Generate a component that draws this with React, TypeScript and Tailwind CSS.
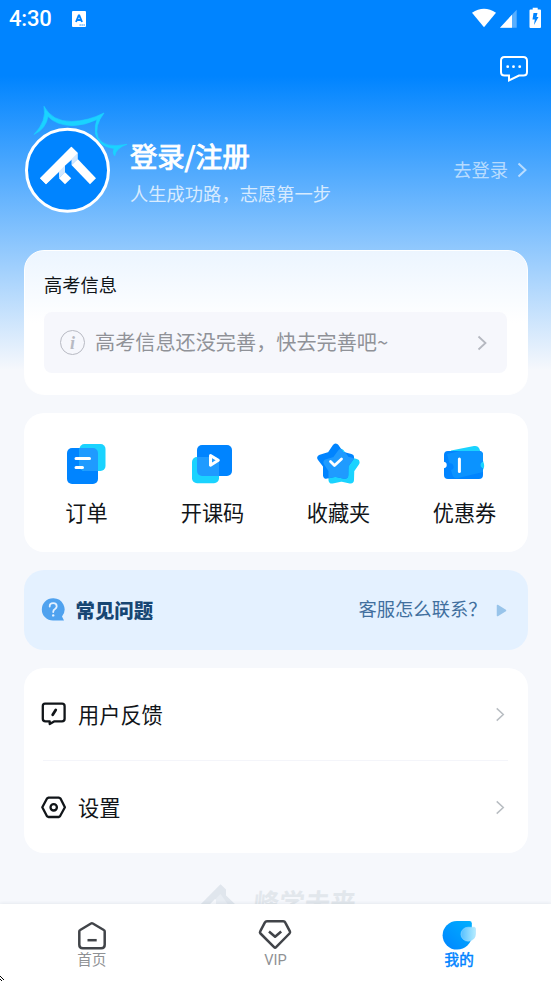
import React from "react";

interface MenuItemI {
  title: string;
  icon: React.ReactNode;
}

const star = "335.7,447.200 341,455 350.500,457.500 345,465.300 344.800,475.200 335.500,473.300 326.500,475.200 326.500,465.500 320.800,458 330.500,455";
const starBack = "341,452.500 346.500,460 356,462.500 350.800,470 350.500,480 341.500,478 332,480 332,470 327,462.500 335.500,460";

const shortcuts: MenuItemI[] = [
  {
    title: "订单",
    icon: (
      <svg className="-ml-px h-11 w-11" viewBox="64 442 44 44">
        <rect x="67" y="448" width="31" height="36" rx="5" fill="#0084ff" />
        <rect x="79.5" y="444" width="26" height="27" rx="5" fill="#1ad3ff" />
        <path d="M79.5 448H93a5 5 0 0 1 5 5V471H84.500a5 5 0 0 1-5-5Z" fill="#1f9bff" />
        <path d="M76 458.500H89.500M76 467.500H82.500" stroke="#fff" strokeWidth="3" strokeLinecap="round" />
      </svg>
    ),
  },
  {
    title: "开课码",
    icon: (
      <svg className="-ml-px h-11 w-11" viewBox="190 442 44 44">
        <rect x="197" y="445" width="35" height="31" rx="5" fill="#0084ff" />
        <rect x="192" y="457" width="27" height="26.300" rx="5" fill="#1ad3ff" />
        <path d="M197 457H214a5 5 0 0 1 5 5V476H202a5 5 0 0 1-5-5Z" fill="#1f9bff" />
        <path d="M210.500 455.500L218.300 460.300L210.500 465.200Z" fill="none" stroke="#fff" strokeWidth="3" strokeLinejoin="round" />
      </svg>
    ),
  },
  {
    title: "收藏夹",
    icon: (
      <svg className="-ml-px h-11 w-11" viewBox="316 442 44 44" strokeWidth="7" strokeLinejoin="round">
        <mask id="starMask" maskUnits="userSpaceOnUse" x="316" y="442" width="44" height="44">
          <polygon points={star} fill="#fff" stroke="#fff" />
        </mask>
        <polygon points={starBack} fill="#1ad3ff" stroke="#1ad3ff" />
        <polygon points={star} fill="#0084ff" stroke="#0084ff" />
        <polygon points={starBack} fill="#1f9bff" stroke="#1f9bff" mask="url(#starMask)" />
        <path d="M330.500 461.500L334.500 465.500L341.500 459" fill="none" stroke="#fff" strokeWidth="2.800" strokeLinecap="round" />
      </svg>
    ),
  },
  {
    title: "优惠券",
    icon: (
      <svg className="-ml-px h-11 w-11" viewBox="442 442 44 44">
        <path d="M451 450.500L474 446Q478 445.300 479.500 449L484 464Q485 468 481 473H455Z" fill="#1ad3ff" />
        <path d="M448 451H479Q483 451 483 455V461.800A3.300 3.300 0 0 0 483 468.300V475Q483 479 479 479H448Q444 479 444 475V468.300A3.300 3.300 0 0 0 444 461.800V455Q444 451 448 451Z" fill="#0084ff" />
        <path d="M447 454L460 451H479Q483 451 483 455V461.800A3.300 3.300 0 0 0 483 468.300V472L458 478Q454 479 452.500 475L451 470A3.300 3.300 0 0 0 449.500 463.500Z" fill="#0b93ff" />
        <path d="M459.400 459V471.500" stroke="#fff" strokeWidth="3" strokeLinecap="round" />
      </svg>
    ),
  },
];

const settings: MenuItemI[] = [
  {
    title: "用户反馈",
    icon: (
      <svg className="h-7 w-7" viewBox="40 700 28 28" fill="none" stroke="#111519" strokeWidth="2.300" strokeLinejoin="round" strokeLinecap="round">
        <path d="M45 703.700H62Q64.600 703.700 64.600 706.300V718.700Q64.600 721.300 62 721.300H54.500L49.700 724V721.300H45.500Q42.800 721.300 42.800 718.700V706.300Q42.800 703.700 45 703.700Z" />
        <path d="M52.700 714.700L55.700 710" strokeWidth="2.800" />
      </svg>
    ),
  },
  {
    title: "设置",
    icon: (
      <svg className="h-7 w-7" viewBox="40 793 28 28" fill="none" stroke="#111519" strokeWidth="2.300" strokeLinejoin="round">
        <path d="M48.300 797.700H59L60.500 798.500L64.900 807.300L60 816.200L58.700 817H48.500L47 816.200L42.300 807.300L47 798.500Z" />
        <circle cx="53.700" cy="807.300" r="3.200" />
      </svg>
    ),
  },
];

const tabs: MenuItemI[] = [
  {
    title: "首页",
    icon: (
      <svg className="h-8 w-9" viewBox="74 919 36 32" fill="none" stroke="#414449" strokeWidth="2.500" strokeLinejoin="round">
        <path d="M79.300 931.500Q79.300 930.500 80.200 930L91 923.500Q91.900 923 92.800 923.500L103.800 930Q104.700 930.500 104.700 931.500V944.800Q104.700 948.300 101.200 948.300H82.800Q79.300 948.300 79.300 944.800Z" />
        <path d="M87.500 940.200H96.700" />
      </svg>
    ),
  },
  {
    title: "VIP",
    icon: (
      <svg className="h-8 w-9" viewBox="257.500 919 36 32" fill="none" stroke="#414449" strokeWidth="2.500" strokeLinejoin="round">
        <path d="M267.500 921.300H283.700Q285.200 921.300 285.800 922.600L290.400 931.300Q290.900 932.500 290 933.500L276.600 947.200Q275.600 948.200 274.600 947.200L261 933.500Q260 932.500 260.700 931.300L265.300 922.600Q266 921.300 267.500 921.300Z" />
        <path d="M269.500 931.500L275.600 936.800L281.700 931.500" />
      </svg>
    ),
  },
  {
    title: "我的",
    icon: (
      <svg className="h-8 w-9" viewBox="441.500 919 36 32">
        <defs>
          <linearGradient id="mineBody" x1="1" y1="0" x2="0" y2="1">
            <stop offset="0" stopColor="#00b0ff" />
            <stop offset="1" stopColor="#0084ff" />
          </linearGradient>
          <linearGradient id="mineDrop" x1="0" y1="0" x2="1" y2="0">
            <stop offset="0" stopColor="#55bfff" />
            <stop offset="1" stopColor="#b4ecff" />
          </linearGradient>
        </defs>
        <path d="M457.500 921H470Q472.300 921 472.300 923.300V935.500A14.600 14.300 0 1 1 457.500 921Z" fill="url(#mineBody)" />
        <path d="M468.500 927.200H474.500Q476 927.200 476 928.700V934A7.300 7 0 1 1 468.500 927.200Z" fill="url(#mineDrop)" stroke="#a0dcff" strokeWidth="0.500" />
      </svg>
    ),
  },
];

function Chevron({ className }: { className: string }) {
  return (
    <svg className={className} viewBox="0 0 10 16" fill="none" stroke="currentColor">
      <path d="M1.500 1.500L8.500 8L1.500 14.500" />
    </svg>
  );
}

function StatusBar() {
  return (
    <div className="flex h-[38px] items-center pl-[9px] text-white">
      <span className="w-[60px] font-['Roboto'] text-[22px] font-medium leading-[38px] tracking-[-0.2px]">4:30</span>
      <svg className="ml-[3px] h-4 w-3.5" viewBox="0 0 14 16">
        <rect width="14" height="16" rx="1" fill="#fff" />
        <path d="M4 11L6.700 4.500H7.300L10 11M5 9H9" fill="none" stroke="#0084ff" strokeWidth="1.900" />
        <path d="M7.500 14H13" stroke="#0084ff" strokeWidth="1" strokeDasharray="1.300 0.700" />
      </svg>
      <svg className="ml-auto mr-2 h-6 w-[74px]" viewBox="469 7 74 24" fill="#fff">
        <path d="M472 12.700Q484 4.700 496 12.700L484 27.300Z" />
        <path d="M516.700 9.700V27.700H500Z" opacity="0.350" />
        <path d="M512 14.800V27.700H500Z" />
        <path d="M532.700 7.800H537.700V9.500H540Q541 9.500 541 10.500V27Q541 28 540 28H530.500Q529.500 28 529.500 27V10.500Q529.500 9.500 530.500 9.500H532.700Z" />
        <path d="M533.500 13H537.500L536.500 17H538.500L534 25L534.800 19.500H532.500Z" fill="#0084ff" />
      </svg>
    </div>
  );
}

function Avatar() {
  return (
    <svg className="h-[120px] w-[106px] shrink-0" viewBox="22 100 106 120">
      <path
        d="M34 134.500Q47 121 44 106.300Q52 121.500 71.500 121.500Q88 121 104 113Q94 126 98 137.500Q104 149 127 144.300Q116 148 114.700 156Q112 153 114 148.500Q99 147 95.500 134Q94.500 125 97 119.500Q85 125.500 72 125.700Q56 125 48 116.500Q46 129 34 134.500Z"
        fill="#1ad3ff"
        stroke="#1ad3ff"
        strokeWidth="0.600"
      />
      <circle cx="67.500" cy="170.300" r="41" fill="#0084ff" stroke="#fff" strokeWidth="3" />
      <path d="M71.500 146.700L40 178.300L46 184.300L59 172V178.300L65 172.500V165.500L71.500 160V165L77.800 159V153Z" fill="#d2e8ff" />
      <path d="M71.300 146.700L77.700 153L46 184.300L40 178.300Z" fill="#fff" />
      <path d="M77.700 159L96 178.300L90 184.300L71.500 165Z" fill="#fff" />
      <path d="M65 172.300L71.200 178.300L65 184.300L59 178.300Z" fill="#fff" />
    </svg>
  );
}

export default function App() {
  return (
    <div className="relative flex h-[981px] w-[551px] flex-col overflow-hidden bg-[#f6f8fc] font-['Noto_Sans_CJK_SC',sans-serif] text-[#111519]">
      <main className="h-[904px] overflow-hidden bg-[linear-gradient(180deg,#0084ff_0px,#0084ff_76px,#f6f8fc_370px)]">
        <StatusBar />

        <div className="flex h-[62px] justify-end pr-[22px] pt-4">
          <svg className="h-[30px] w-[30px]" viewBox="499 54 30 30" fill="none" stroke="#fff" strokeWidth="2">
            <path d="M504.500 57H523.200Q527 57 527 60.800V72Q527 75.500 523.500 75.500H519L509 80.500V75.500H504.500Q501 75.500 501 72V60.800Q501 57 504.500 57Z" />
            <path d="M507.700 66.700H507.710M513.500 66.700H513.510M519.700 66.700H519.710" strokeWidth="2.800" strokeLinecap="round" />
          </svg>
        </div>

        <div className="flex h-[150px] pl-[22px] pr-6">
          <Avatar />
          <div className="ml-[2px] pt-[35px] text-white">
            <div className="text-[27.3px] leading-10 [-webkit-text-stroke:0.9px_#fff]">登录/注册</div>
            <div className="mt-[5px] text-[18.3px] leading-[26px] text-white/75">人生成功路，志愿第一步</div>
          </div>
          <div className="ml-auto mt-[57px] flex h-[26px] items-center text-[18.3px] text-white/60">
            去登录
            <Chevron className="ml-[9px] h-4 w-2.5 stroke-2" />
          </div>
        </div>

        <div className="mx-[23.5px] flex flex-col gap-[18px]">
          <section className="h-[145px] rounded-[20px] border border-white bg-[linear-gradient(180deg,#ecf5ff_0px,#ffffff_72px)] px-[19.5px] pt-[19px]">
            <h2 className="text-[18.3px] leading-7">高考信息</h2>
            <div className="mt-[14px] flex h-[61px] items-center rounded-lg bg-[#f6f7fc] pl-4 pr-5 text-[20.15px] text-[#909298]">
              <span className="flex h-[25px] w-[25px] items-center justify-center rounded-full border-[1.5px] border-[#b8bac3] font-['Liberation_Serif',serif] text-[18px] font-bold italic leading-none text-[#b8bac3]">
                i
              </span>
              <span className="ml-[10px]">高考信息还没完善，快去完善吧~</span>
              <Chevron className="ml-auto h-4 w-2.5 stroke-[1.8] text-[#b5b8c0]" />
            </div>
          </section>

          <section className="grid h-[139px] grid-cols-4 rounded-[20px] bg-white pt-[29px]">
            {shortcuts.map((item) => (
              <div key={item.title} className="flex flex-col items-center">
                {item.icon}
                <span className="mt-[11px] text-[21.2px] leading-[30px]">{item.title}</span>
              </div>
            ))}
          </section>

          <section className="flex h-20 items-center rounded-[20px] bg-[#e4f1ff] pl-[17px] pr-[21px]">
            <svg className="h-6 w-6" viewBox="41 598 24 24">
              <path d="M53 598.200A11.200 11.200 0 0 1 62 616.500L64 620.600H53A11.200 11.200 0 0 1 53 598.200Z" fill="#4fa2ef" />
              <path d="M49.700 606.500Q49.700 603.200 53.200 603.200Q56.700 603.200 56.700 606.200Q56.700 607.900 55 609Q53.200 610 53.200 612" fill="none" stroke="#e4f1ff" strokeWidth="1.800" strokeLinecap="round" />
              <circle cx="53.200" cy="615.400" r="1.200" fill="#e4f1ff" />
            </svg>
            <span className="ml-[11px] text-[19.4px] font-black text-[#174673]">常见问题</span>
            <span className="-mt-0.5 ml-auto text-[18.3px] text-[#416f9e]">客服怎么联系？</span>
            <svg className="ml-[9px] h-[13px] w-[11px]" viewBox="0 0 11 13">
              <path d="M1.500 1.500L9.500 6.500L1.500 11.500Z" fill="#98c4ea" stroke="#98c4ea" strokeWidth="1.500" strokeLinejoin="round" />
            </svg>
          </section>

          <section className="h-[185px] rounded-[20px] bg-white px-[19.5px]">
            {settings.map((item) => (
              <div key={item.title} className="flex h-[93px] items-center border-b border-[#f4f5fa] last:h-[92px] last:border-b-0">
                <div className="-ml-[3px]">{item.icon}</div>
                <span className="ml-[10px] text-[21.2px]">{item.title}</span>
                <Chevron className="ml-auto mr-[3px] h-[15px] w-[10px] stroke-[1.6] text-[#b8bdc2]" />
              </div>
            ))}
          </section>
        </div>

        <div className="mt-[30px] flex pl-[199px]">
          <svg className="h-[24px] w-[44px]" viewBox="199 883 44 24" fill="#e0e6ed">
            <path d="M220.500 884.300L226 889.500V895.500L237 906H228L215 899L208 906H199Z" />
            <path d="M220.500 894L216 898.500V906H229Z" fill="#e8edf3" />
          </svg>
          <span className="ml-[11px] -skew-x-6 text-[25.500px] font-bold leading-[36px] text-[#e2e7ec]">峰学未来</span>
        </div>
      </main>

      <nav className="relative grid h-[77px] grid-cols-3 bg-white pt-[15px] font-['Roboto','Noto_Sans_CJK_SC',sans-serif] shadow-[0_-1px_3px_rgba(30,50,80,0.07)]">
        {tabs.map((tab) => (
          <div
            key={tab.title}
            className={
              tab.title === "我的"
                ? "flex flex-col items-center text-[#0084ff] [-webkit-text-stroke:0.5px_#0084ff]"
                : "flex flex-col items-center text-[#8f9194]"
            }
          >
            {tab.icon}
            <span className="text-[14.600px] leading-[18px]">{tab.title}</span>
          </div>
        ))}
      </nav>

      <svg className="absolute bottom-0 left-0 h-[5px] w-[5px]" viewBox="0 0 5 5" fill="#000">
        <path d="M0 0H1V1H0ZM1 1H2V2H1ZM2 2H3V3H2ZM3 3H4V4H3ZM0 3H1V4H0ZM1 4H2V5H1Z" />
      </svg>
    </div>
  );
}
